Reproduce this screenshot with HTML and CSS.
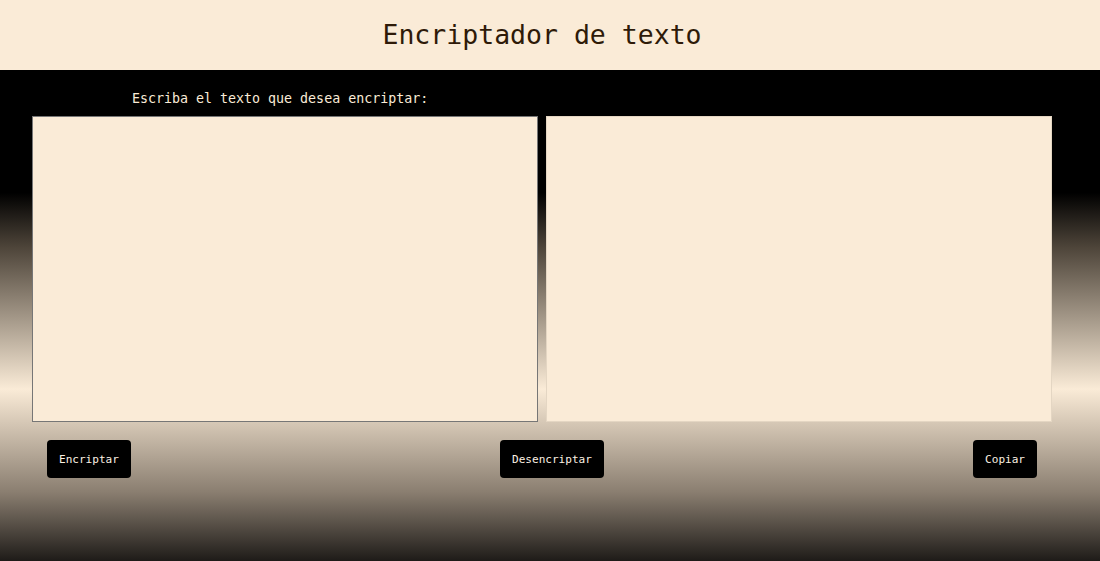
FILE: index.html
```html
<!DOCTYPE html>
<html lang="es">
<head>
<meta charset="utf-8">
<title>Encriptador de texto</title>
<link rel="stylesheet" href="styles.css">
</head>
<body>
<header class="header">
  <h1 class="title">Encriptador de texto</h1>
</header>
<main class="main">
  <label class="label" for="entrada">Escriba el texto que desea encriptar:</label>
  <div class="areas">
    <textarea id="entrada" class="area area-in"></textarea>
    <textarea class="area area-out" readonly></textarea>
  </div>
  <div class="actions">
    <button class="btn">Encriptar</button>
    <button class="btn">Desencriptar</button>
    <button class="btn">Copiar</button>
  </div>
</main>
</body>
</html>
```
FILE: styles.css
```css
* { box-sizing: border-box; }
html, body { margin: 0; padding: 0; height: 100%; }
body {
  font-family: "DejaVu Sans Mono", "Liberation Mono", monospace;
  display: flex;
  flex-direction: column;
  background: #1e1b18;
}
.header {
  height: 70px;
  background: #faebd7;
  display: flex;
  align-items: center;
  justify-content: center;
  flex: none;
  padding: 0 48px 0 32px;
}
.title {
  margin: 0;
  font-weight: normal;
  font-size: 26.5px;
  color: #2e1a08;
  line-height: 1;
  padding-top: 1px;
}
.main {
  flex: 1;
  background: linear-gradient(to bottom, #000 0%, #000 25%, #4d4439 36%, #faebd7 65%, #8a7e70 86%, #1e1b18 100%);
  padding: 21px 48px 0 32px;
}
.label {
  display: block;
  margin-left: 100px;
  font-size: 13.3px;
  line-height: 16px;
  color: #faebd7;
  height: 25px;
}
.areas {
  display: flex;
  gap: 8px;
}
.area {
  width: 506px;
  height: 306px;
  margin: 0;
  background: #faebd7;
  resize: none;
  font-family: inherit;
  outline: none;
}
.area-in { border: 1px solid #767676; }
.area-out { border: 1px solid #e4d6c3; }
.actions {
  display: flex;
  justify-content: space-between;
  padding: 18px 15px 0;
}
.btn {
  height: 38px;
  padding: 0 12px;
  background: #000;
  color: #fbf0e2;
  border: none;
  border-radius: 4px;
  font-family: inherit;
  font-size: 11.05px;
}
```
